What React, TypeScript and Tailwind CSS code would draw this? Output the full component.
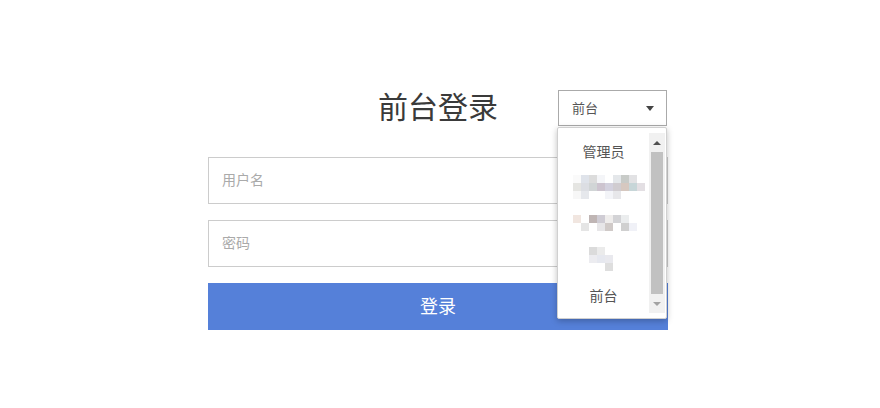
const font = { fontFamily: '"Noto Sans CJK SC", "Noto Sans", sans-serif' };

// blurred (mosaic) entries in the role list, 8px cells
const mosaicA = [
  ['bg-[#fafafa]', 'bg-[#dfe3ea]', 'bg-[#dcdcdc]', 'bg-[#f4f5f8]', 'bg-white', 'bg-[#e4e7ea]', 'bg-[#c8cbc8]', 'bg-[#e2e2e4]', 'bg-white'],
  ['bg-[#e5e5e2]', 'bg-[#dcdee3]', 'bg-[#d1d5d6]', 'bg-[#cdc4cf]', 'bg-[#d3d1de]', 'bg-[#d0ccd0]', 'bg-[#d6c8c0]', 'bg-[#c7d6d8]', 'bg-[#e3dfe3]'],
  ['bg-[#f7f7f7]', 'bg-[#e6e8ec]', 'bg-white', 'bg-white', 'bg-[#f3f4f8]', 'bg-[#e7e7ea]', 'bg-white', 'bg-white', 'bg-white'],
];
const mosaicB = [
  ['bg-[#f1e6e0]', 'bg-white', 'bg-[#bfb5b4]', 'bg-[#cfccd4]', 'bg-[#efedec]', 'bg-[#d3d3d6]', 'bg-[#ebedee]', 'bg-white', 'bg-white'],
  ['bg-white', 'bg-[#e5e5e5]', 'bg-white', 'bg-[#e7e6e8]', 'bg-[#d0cac8]', 'bg-white', 'bg-[#d0d0d0]', 'bg-[#f0f1f7]', 'bg-white'],
];
const mosaicC = [
  ['bg-white', 'bg-white', 'bg-[#dbdbdb]', 'bg-[#ebebeb]', 'bg-white', 'bg-white', 'bg-white', 'bg-white', 'bg-white'],
  ['bg-white', 'bg-white', 'bg-[#ececf0]', 'bg-[#e6e8ef]', 'bg-[#e9e9ee]', 'bg-white', 'bg-white', 'bg-white', 'bg-white'],
  ['bg-white', 'bg-white', 'bg-white', 'bg-white', 'bg-[#dedede]', 'bg-white', 'bg-white', 'bg-white', 'bg-white'],
];

function Mosaic({ rows }: { rows: string[][] }) {
  return (
    <div className="flex flex-col">
      {rows.map((row, i) => (
        <div key={i} className="flex">
          {row.map((c, j) => (
            <div key={j} className={`w-[8px] h-[8px] ${c}`}></div>
          ))}
        </div>
      ))}
    </div>
  );
}

export default function App() {
  return (
    <div className="w-[880px] h-[408px] bg-white text-[#333]" style={font}>
      <div className="w-[460px] ml-[208px] pt-[90px]">
        {/* title + role select */}
        <div className="relative h-[36px] flex items-center justify-center">
          <h1 className="text-[30px] leading-[36px] pb-[6px] text-[#3a3a3a]">前台登录</h1>
          <div className="absolute right-[1px] top-0 w-[109px]">
            <div className="h-[36px] border border-[#aaa] bg-white flex items-center justify-between pl-[13px] pr-[12px]">
              <span className="text-[13px] text-[#555]">前台</span>
              <span className="w-0 h-0 border-l-[4px] border-r-[4px] border-t-[5px] border-l-transparent border-r-transparent border-t-[#444]"></span>
            </div>
            {/* dropdown */}
            <div className="absolute left-[-1px] top-[37px] w-[110px] h-[192px] bg-white border border-[#d0d0d0] rounded-[2px] shadow-[0_2px_6px_rgba(0,0,0,0.25)] py-[5px] flex z-10">
              <div className="flex-1 flex flex-col text-[14px] text-[#555]">
                <div className="h-[36px] flex items-center justify-center">管理员</div>
                <div className="h-[36px] flex items-center pl-[15px]">
                  <Mosaic rows={mosaicA} />
                </div>
                <div className="h-[36px] flex items-center pl-[15px]">
                  <Mosaic rows={mosaicB} />
                </div>
                <div className="h-[36px] flex items-center pl-[15px]">
                  <Mosaic rows={mosaicC} />
                </div>
                <div className="h-[36px] flex items-center justify-center">前台</div>
              </div>
              {/* scrollbar */}
              <div className="w-[16px] mr-[1px] bg-[#f1f1f1] flex flex-col items-center">
                <div className="h-[19px] flex items-center justify-center">
                  <span className="w-0 h-0 border-l-[4px] border-r-[4px] border-b-[4px] border-l-transparent border-r-transparent border-b-[#505050]"></span>
                </div>
                <div className="flex-1 w-[12px] bg-[#c1c1c1]"></div>
                <div className="h-[19px] flex items-center justify-center">
                  <span className="w-0 h-0 border-l-[4px] border-r-[4px] border-t-[4px] border-l-transparent border-r-transparent border-t-[#a3a3a3]"></span>
                </div>
              </div>
            </div>
          </div>
        </div>

        {/* form */}
        <div className="mt-[31px] flex flex-col gap-[16px]">
          <input
            className="h-[47px] border border-[#ccc] px-[13px] pb-[3px] text-[14px] outline-none placeholder:text-[#aaa]"
            placeholder="用户名"
          />
          <input
            type="password"
            className="h-[47px] border border-[#ccc] px-[13px] pb-[3px] text-[14px] outline-none placeholder:text-[#aaa]"
            placeholder="密码"
          />
          <button className="h-[47px] pb-[2px] bg-[#5580d9] text-white text-[18px]">登录</button>
        </div>
      </div>
    </div>
  );
}
